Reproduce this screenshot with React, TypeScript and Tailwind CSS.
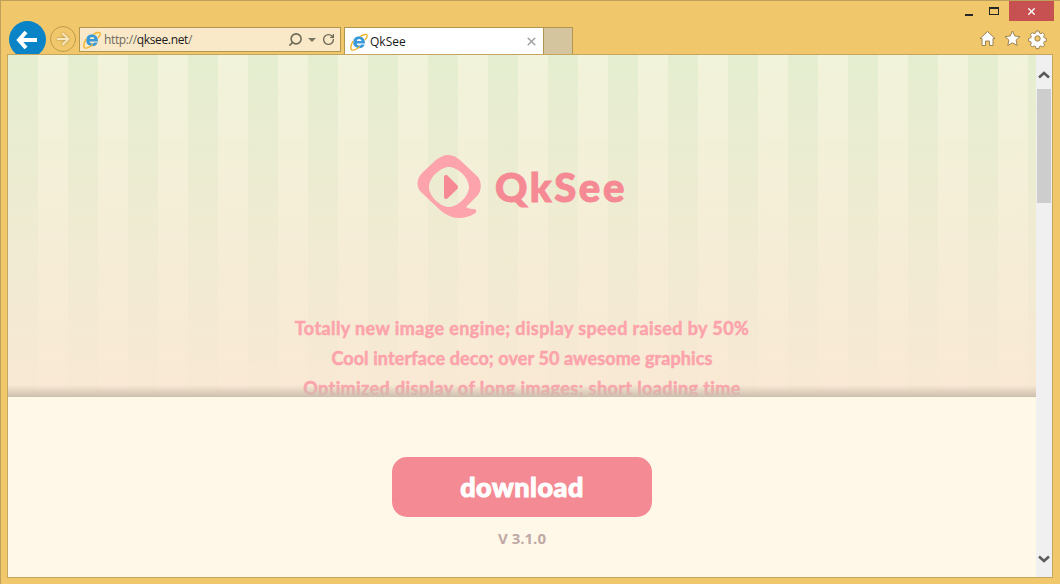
import { Search, RotateCw, ArrowRight, X } from "lucide-react";

function IeIcon({ size }: { size: number }) {
  return (
    <svg width={size} height={size} viewBox="0 0 20 20" className="shrink-0">
      <path d="M10 3.600a6.600 6.600 0 0 1 6.600 6.600v1.400H7.400c.2 1.500 1.400 2.300 2.800 2.300 1.100 0 2-.4 2.600-1.200h3.500a6.600 6.600 0 1 1-6.300-9.100zM7.500 8.900h5.200c-.2-1.300-1.200-2.100-2.600-2.100s-2.400.8-2.600 2.100z" fill="#3a9ad9" fillRule="evenodd" />
      <path d="M3 9.500C.2 15 .2 19 3 19c2 0 5-1.600 7.500-3.800M12 3.500c3.500-2 6.500-2.600 7-1.200.5 1.200-.4 3-2 5" fill="none" stroke="#f2b632" strokeWidth="1.600" strokeLinecap="round" />
    </svg>
  );
}

function ToolIcon({ d }: { d: string }) {
  return (
    <svg width="17" height="17" viewBox="0 0 17 17" className="overflow-visible">
      <path d={d} fill="#fff" stroke="#9c8352" strokeWidth="1" strokeLinejoin="round" fillRule="evenodd" />
    </svg>
  );
}

function LogoMark() {
  return (
    <svg width="64" height="64" viewBox="0 0 64 64" className="shrink-0 overflow-visible">
      <path
        d="M31 0C36 0 40 2 44 6L60 21C65 26 65 36 60 41L49 52C52 54 55 54 57 54C60 54 60 58 57 59C50 63 41 64 35 62C30 60 26 58 22 54L5 38C-1 33 -1 24 5 18L19 5C23 2 27 0 31 0ZM32 12C24 12 12 22 12 32C12 42 24 52 32 52C40 52 52 42 52 32C52 22 40 12 32 12Z"
        fill="#fca3ab"
        fillRule="evenodd"
      />
      <path d="M27 22C27 20 29 19.500 30.500 20.500L40 30C41.300 31.300 41.300 33 40 34.300L30.500 43.500C29 44.500 27 43.800 27 42Z" fill="#f58a94" />
    </svg>
  );
}

const features = [
  { text: "Totally new image engine; display speed raised by 50%", track: "tracking-[0.4px]" },
  { text: "Cool interface deco; over 50 awesome graphics", track: "tracking-[0.1px]" },
  { text: "Optimized display of long images; short loading time", track: "tracking-[0.4px]" },
];

export default function App() {
  return (
    <div className="w-[1060px] h-[584px] flex flex-col overflow-hidden bg-[#f0c76a] border-t border-l border-[#bda05a] font-['Liberation_Sans',sans-serif]">
      <header className="h-[53px] shrink-0 flex items-start overflow-hidden">
        <div className="ml-[8px] mt-[20px] w-[37px] h-[37px] shrink-0 rounded-full bg-[#0a84c6] flex items-center justify-center">
          <svg width="24" height="20" viewBox="0 0 24 20">
            <path d="M10 2L3 10l7 8M3 10h18" fill="none" stroke="#fff" strokeWidth="4" strokeLinejoin="miter" />
          </svg>
        </div>
        <div className="ml-[4px] mt-[25px] w-[26px] h-[26px] shrink-0 rounded-full border border-[#c09a4a] flex items-center justify-center">
          <ArrowRight size={18} strokeWidth={2.5} className="text-[#f8e6bd] [filter:drop-shadow(0_0_1px_#a98a45)]" />
        </div>
        <div className="ml-[3px] mt-[26px] w-[262px] h-[25px] shrink-0 flex items-center bg-[#f9e9c8] border border-[#b2954f] pl-[3px] pr-[4px]">
          <IeIcon size={18} />
          <span className="ml-[3px] text-[12px] text-[#6d6a60] font-['Open_Sans',sans-serif] tracking-[-0.35px]">
            http://<span className="text-[#1a1a1a]">qksee.net</span>/
          </span>
          <Search size={15} strokeWidth={2.5} className="ml-auto text-[#6f6a58] -scale-x-100" />
          <span className="ml-[5px] w-0 h-0 border-x-[4px] border-x-transparent border-t-[4px] border-t-[#7a7462]" />
          <RotateCw size={13} strokeWidth={2.5} className="ml-[6px] mr-[1px] text-[#6f6a58]" />
        </div>
        <div className="ml-[3px] mt-[26px] w-[200px] h-[28px] shrink-0 flex items-center bg-white border border-b-0 border-[#b2954f] pl-[5px] pr-[5px]">
          <IeIcon size={18} />
          <span className="ml-[2px] text-[12px] text-[#1a1a1a] font-['Open_Sans',sans-serif]">QkSee</span>
          <X size={13} strokeWidth={3} className="ml-auto text-[#a3a3a3]" />
        </div>
        <div className="mt-[26px] w-[29px] h-[28px] shrink-0 bg-[#d4c59f] border border-l-0 border-b-0 border-[#b2954f]" />
        <div className="ml-auto mr-[6px] flex flex-col items-end">
          <div className="flex items-start h-[20px]">
            <div className="w-[45px] h-[20px] flex items-end justify-end pb-[5px] pr-[7px]">
              <span className="w-[8px] h-[2px] bg-[#262626]" />
            </div>
            <div className="w-[27px] h-[20px] flex items-center justify-center">
              <span className="w-[10px] h-[8px] border border-t-[2px] border-[#262626]" />
            </div>
            <div className="ml-[2px] w-[45px] h-[20px] bg-[#c75050] flex items-center justify-center">
              <X size={11} strokeWidth={3} className="text-white" />
            </div>
          </div>
          <div className="mt-[9px] mr-[8px] flex items-center gap-[8px]">
            <ToolIcon d="M8.500 1.500L16 8.500h-2v7h-3.500v-4.500h-4v4.500H3v-7H1z" />
            <ToolIcon d="M8.500 1l2.300 5 5.200.6-3.900 3.500 1.100 5.400-4.700-2.700-4.700 2.700 1.100-5.400L1 6.600 6.200 6z" />
            <ToolIcon d="M7 1h3l.4 2 1.500.7 1.800-1.100 2 2-1.100 1.800.7 1.500 2 .4v3l-2 .4-.7 1.500 1.100 1.800-2 2-1.800-1.100-1.500.7-.4 2H7l-.4-2-1.500-.7-1.800 1.100-2-2 1.100-1.800-.7-1.500-2-.4v-3l2-.4.7-1.500L1.300 4.600l2-2 1.800 1.100 1.500-.7zM8.500 5.800a2.700 2.700 0 1 0 0 5.400 2.700 2.700 0 0 0 0-5.400z" />
          </div>
        </div>
      </header>

      <div className="relative ml-[6px] mr-[7px] h-[524px] shrink-0 flex border border-[#c4a65e] bg-[#fff8e9]">
        <main className="flex-1 min-w-0 flex flex-col">
          <section className="relative h-[342px] shrink-0 overflow-hidden flex flex-col items-center bg-[linear-gradient(180deg,rgba(250,232,212,0)_0%,rgba(250,232,212,0.92)_100%),repeating-linear-gradient(90deg,#e5eed0_0px,#e5eed0_30px,#f1f3da_30px,#f1f3da_60px)]">
            <div className="mt-[100px] flex items-center">
              <LogoMark />
              <span className="ml-[14px] text-[40px] leading-none font-black text-[#f58a94] tracking-[2.6px] font-['Lato',sans-serif] [-webkit-text-stroke:1px_#f58a94]">QkSee</span>
            </div>
            <div className="mt-[98px] flex flex-col items-center gap-[8px]">
              {features.map((line) => (
                <p key={line.text} className={`h-[22px] leading-[22px] text-[18px] font-bold whitespace-nowrap text-[#fca3ab] font-['Lato',sans-serif] [-webkit-text-stroke:0.5px_#fca3ab] ${line.track}`}>
                  {line.text}
                </p>
              ))}
            </div>
            <div className="absolute bottom-0 left-0 right-0 h-[12px] bg-gradient-to-b from-[#cdbfae00] to-[#cdbfae]" />
          </section>
          <section className="flex-1 flex flex-col items-center">
            <button className="mt-[60px] w-[260px] h-[60px] rounded-[15px] bg-[#f48a93] text-white text-[27px] font-black font-['Lato',sans-serif] tracking-[0.5px] [-webkit-text-stroke:1px_#fff]">
              download
            </button>
            <p className="mt-[11px] text-[15px] leading-[20px] font-bold text-[#bfa9a5] font-['Open_Sans',sans-serif]">V 3.1.0</p>
          </section>
        </main>
        <aside className="w-[16px] shrink-0 bg-[#f0f0f0] flex flex-col items-center">
          <svg width="12" height="8" viewBox="0 0 12 8" className="mt-[16px]">
            <path d="M1 6.500L6 2l5 4.500" fill="none" stroke="#5a5a5a" strokeWidth="2.500" />
          </svg>
          <div className="mt-[10px] w-[14px] h-[114px] bg-[#cdcdcd]" />
          <svg width="12" height="8" viewBox="0 0 12 8" className="mt-auto mb-[14px]">
            <path d="M1 1.500L6 6l5-4.500" fill="none" stroke="#5a5a5a" strokeWidth="2.500" />
          </svg>
        </aside>
      </div>
    </div>
  );
}
